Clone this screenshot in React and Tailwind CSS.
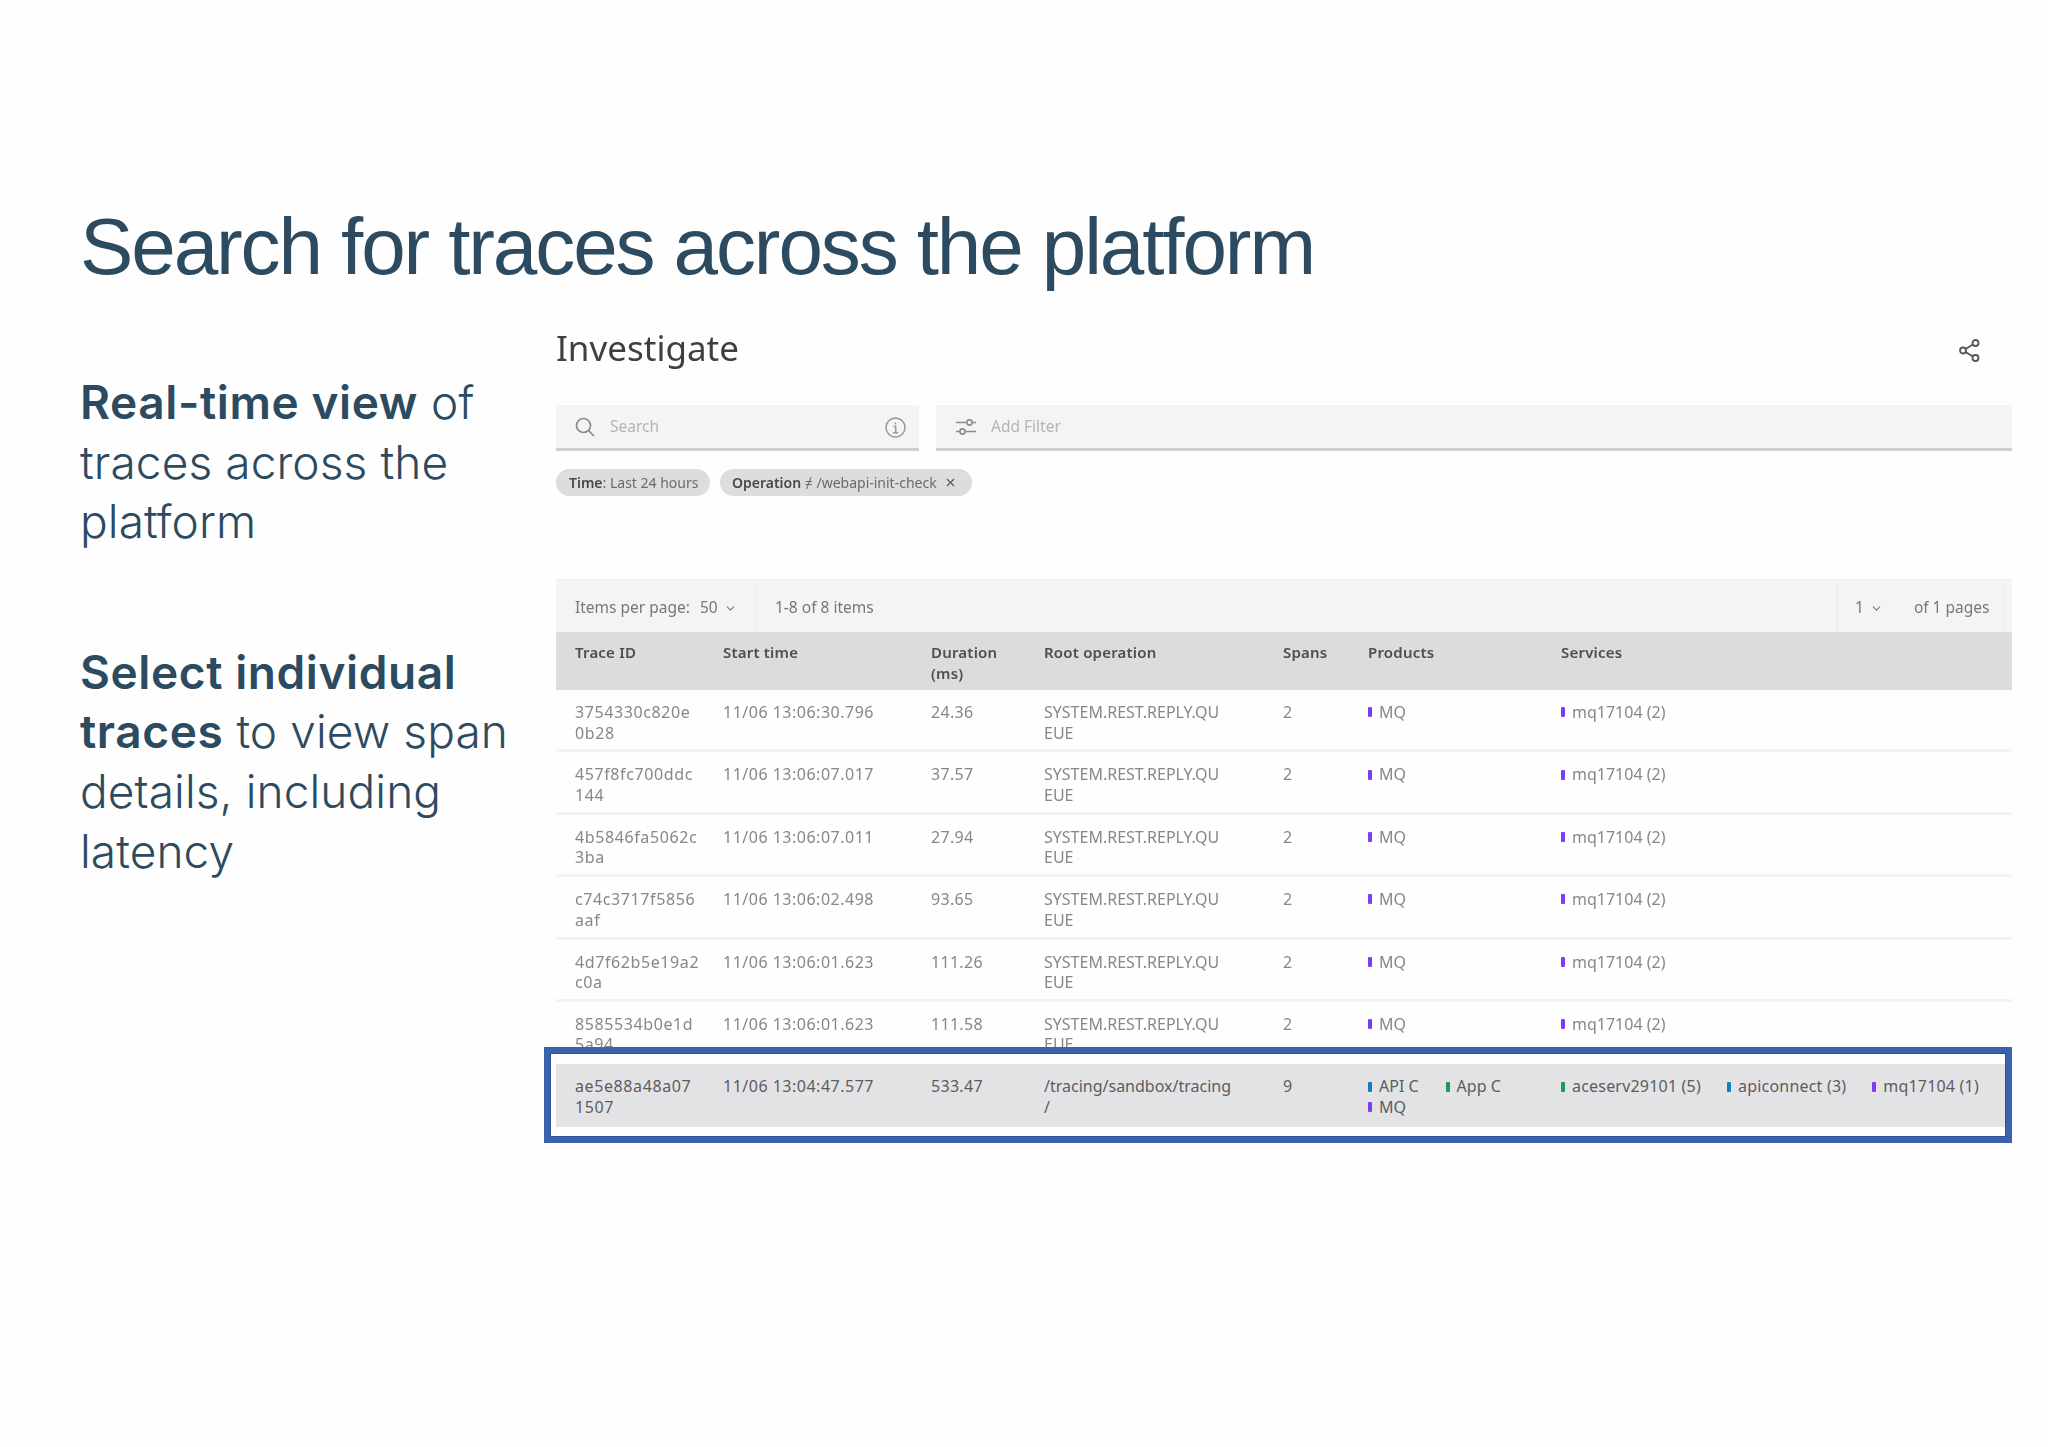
import { ChevronDown, X } from "lucide-react";

const rows = [
  { id: ["3754330c820e", "0b28"], time: "11/06 13:06:30.796", dur: "24.36" },
  { id: ["457f8fc700ddc", "144"], time: "11/06 13:06:07.017", dur: "37.57" },
  { id: ["4b5846fa5062c", "3ba"], time: "11/06 13:06:07.011", dur: "27.94" },
  { id: ["c74c3717f5856", "aaf"], time: "11/06 13:06:02.498", dur: "93.65" },
  { id: ["4d7f62b5e19a2", "c0a"], time: "11/06 13:06:01.623", dur: "111.26" },
  { id: ["8585534b0e1d", "5a94"], time: "11/06 13:06:01.623", dur: "111.58" },
];

const cols = "grid grid-cols-[148px_208px_113px_239px_85px_193px_1fr] pl-[19px]";

function Tag({ color, children }) {
  return (
    <span className="flex items-center whitespace-nowrap">
      <span className={`w-[4px] h-[10px] rounded-[1px] mr-[7px] ${color}`}></span>
      {children}
    </span>
  );
}

export default function App() {
  return (
    <div className="min-h-[1447px] bg-[#fefefe] pt-[200px] font-['Inter','Liberation_Sans',sans-serif] text-[#2c4a60]">
      <h1 className="pl-[80px] pt-[1px] h-[92px] font-['Liberation_Sans',sans-serif] text-[80px] leading-[92px] font-normal tracking-[-2.1px] blur-[0.4px]">
        Search for traces across the platform
      </h1>

      <div className="flex mt-[28px]">
        {/* Left copy */}
        <div className="w-[556px] shrink-0 pl-[80px] pt-[53px] text-[46px] leading-[59.6px] font-light tracking-[0.1px]">
          <p>
            <span className="font-semibold tracking-[0.6px]">Real-time view</span> of
            <br />
            traces across the
            <br />
            platform
          </p>
          <p className="mt-[91px]">
            <span className="font-semibold tracking-[0.6px]">Select individual</span>
            <br />
            <span className="font-semibold tracking-[0.6px]">traces</span> to view span
            <br />
            details, including
            <br />
            latency
          </p>
        </div>

        {/* Investigate panel */}
        <div className="w-[1456px] font-['Noto_Sans',sans-serif] blur-[0.7px]">
          <div className="flex items-center justify-between h-[85px] pr-[32px]">
            <h2 className="text-[35px] text-[#3f3f42] font-normal leading-none pb-[30px]">Investigate</h2>
            <svg className="w-[21px] h-[23px] mb-[25px] text-[#55555a]" viewBox="0 0 21 23" fill="none" stroke="currentColor" strokeWidth="1.8">
              <circle cx="16.5" cy="4" r="3" />
              <circle cx="4" cy="11.5" r="3" />
              <circle cx="16.5" cy="19" r="3" />
              <path d="M6.6 10 13.9 5.6M6.6 13 13.9 17.4" />
            </svg>
          </div>

          <div className="flex gap-[17px] h-[46px]">
            <div className="w-[363px] flex items-center bg-[#f4f3f5] border-b-[3px] border-[#d0cfd2] pl-[19px] pr-[13px] pt-[1px] text-[15.5px] text-[#b4b4b6]">
              <svg className="w-[20px] h-[20px] text-[#8d8d90] mr-[15px]" viewBox="0 0 20 20" fill="none" stroke="currentColor" strokeWidth="1.7">
                <circle cx="8.5" cy="8.5" r="7" />
                <path d="M13.6 13.6 19 19" />
              </svg>
              <span>Search</span>
              <svg className="ml-auto w-[21px] h-[21px] text-[#98989b]" viewBox="0 0 21 21" fill="none" stroke="currentColor" strokeWidth="1.5">
                <circle cx="10.5" cy="10.5" r="9.5" />
                <path d="M8.5 9.5h2.2v6M8 15.7h5.2M10.4 5.4v2" />
              </svg>
            </div>
            <div className="flex-1 flex items-center bg-[#f4f3f5] border-b-[3px] border-[#d0cfd2] pl-[20px] pt-[1px] text-[15.5px] text-[#b4b4b6]">
              <svg className="w-[20px] h-[18px] text-[#8d8d90] mr-[15px]" viewBox="0 0 20 18" fill="none" stroke="currentColor" strokeWidth="1.6">
                <path d="M0 4.5h11M16 4.5h4M0 13.5h4M9 13.5h11" />
                <circle cx="13.5" cy="4.5" r="2.6" />
                <circle cx="6.5" cy="13.5" r="2.6" />
              </svg>
              <span>Add Filter</span>
            </div>
          </div>

          <div className="flex gap-[9.5px] mt-[18px] h-[27px] text-[14px] text-[#6a6a6d]">
            <span className="flex items-center bg-[#dddcde] rounded-full pl-[13px] pr-[12px]">
              <b className="font-semibold text-[#48484b]">Time</b>: Last 24 hours
            </span>
            <span className="flex items-center bg-[#dddcde] rounded-full pl-[12px] pr-[15px]">
              <b className="font-semibold text-[#48484b]">Operation</b>&nbsp;≠ /webapi-init-check
              <X className="w-[13px] h-[13px] ml-[7px] text-[#55555a]" />
            </span>
          </div>

          {/* Table toolbar */}
          <div className="flex items-stretch h-[53px] mt-[83px] bg-[#f4f3f5] border-t border-[#eeedef] pt-[4px] text-[15.5px] text-[#77777a]">
            <div className="w-[200px] flex items-center pl-[19px] border-r border-[#eaeaec]">
              <span>Items per page:</span>
              <span className="ml-[10px]">50</span>
              <ChevronDown className="w-[13px] h-[13px] ml-[6px]" />
            </div>
            <div className="flex items-center pl-[19px]">1-8 of 8 items</div>
            <div className="ml-auto w-[168px] mr-[7px] flex items-center pl-[17px] border-x border-[#eaeaec]">
              <span>1</span>
              <ChevronDown className="w-[13px] h-[13px] ml-[6px]" />
              <span className="ml-[31px]">of 1 pages</span>
            </div>
          </div>

          {/* Table header */}
          <div className={`${cols} h-[58px] pt-[10px] bg-[#dcdbdd] text-[15px] leading-[20.5px] font-semibold tracking-[0.2px] text-[#4e4e51]`}>
            <div>Trace ID</div>
            <div>Start time</div>
            <div>Duration<br />(ms)</div>
            <div>Root operation</div>
            <div>Spans</div>
            <div>Products</div>
            <div>Services</div>
          </div>

          {rows.map((row, i) => (
            <div
              key={i}
              className={`${cols} h-[62.4px] pt-[12px] text-[16px] leading-[20.5px] text-[#87878a] overflow-hidden ${i < 5 ? "border-b-[3px] border-[#f3f3f5]" : ""}`}
            >
              <div className="tracking-[0.6px]">{row.id[0]}<br />{row.id[1]}</div>
              <div className="tracking-[0.5px]">{row.time}</div>
              <div className="tracking-[0.3px]">{row.dur}</div>
              <div>SYSTEM.REST.REPLY.QU<br />EUE</div>
              <div>2</div>
              <div className="flex items-start"><Tag color="bg-[#7c3ff0]">MQ</Tag></div>
              <div className="flex items-start"><Tag color="bg-[#7c3ff0]">mq17104 (2)</Tag></div>
            </div>
          ))}

          {/* Selected row */}
          <div className={`${cols} relative h-[63px] pt-[12px] bg-[#e3e3e5] text-[16px] leading-[20.5px] text-[#5c5c5f]`}>
            <div className="tracking-[0.6px]">ae5e88a48a07<br />1507</div>
            <div className="tracking-[0.5px]">11/06 13:04:47.577</div>
            <div className="tracking-[0.3px]">533.47</div>
            <div>/tracing/sandbox/tracing<br />/</div>
            <div>9</div>
            <div className="flex flex-wrap content-start gap-x-[27px] pr-[19px]">
              <Tag color="bg-[#0f7fc0]">API C</Tag>
              <Tag color="bg-[#1c9a58]">App C</Tag>
              <Tag color="bg-[#7c3ff0]">MQ</Tag>
            </div>
            <div className="flex items-start gap-x-[26px] tracking-[0.2px]">
              <Tag color="bg-[#1c9a58]">aceserv29101 (5)</Tag>
              <Tag color="bg-[#0f7fc0]">apiconnect (3)</Tag>
              <Tag color="bg-[#7c3ff0]">mq17104 (1)</Tag>
            </div>
            <div className="absolute -left-[12px] right-0 -top-[17px] -bottom-[16px] border-[6.5px] border-[#3b62ad] shadow-[inset_0_0_0_1px_#2f5293] z-10"></div>
          </div>
        </div>
      </div>
    </div>
  );
}
